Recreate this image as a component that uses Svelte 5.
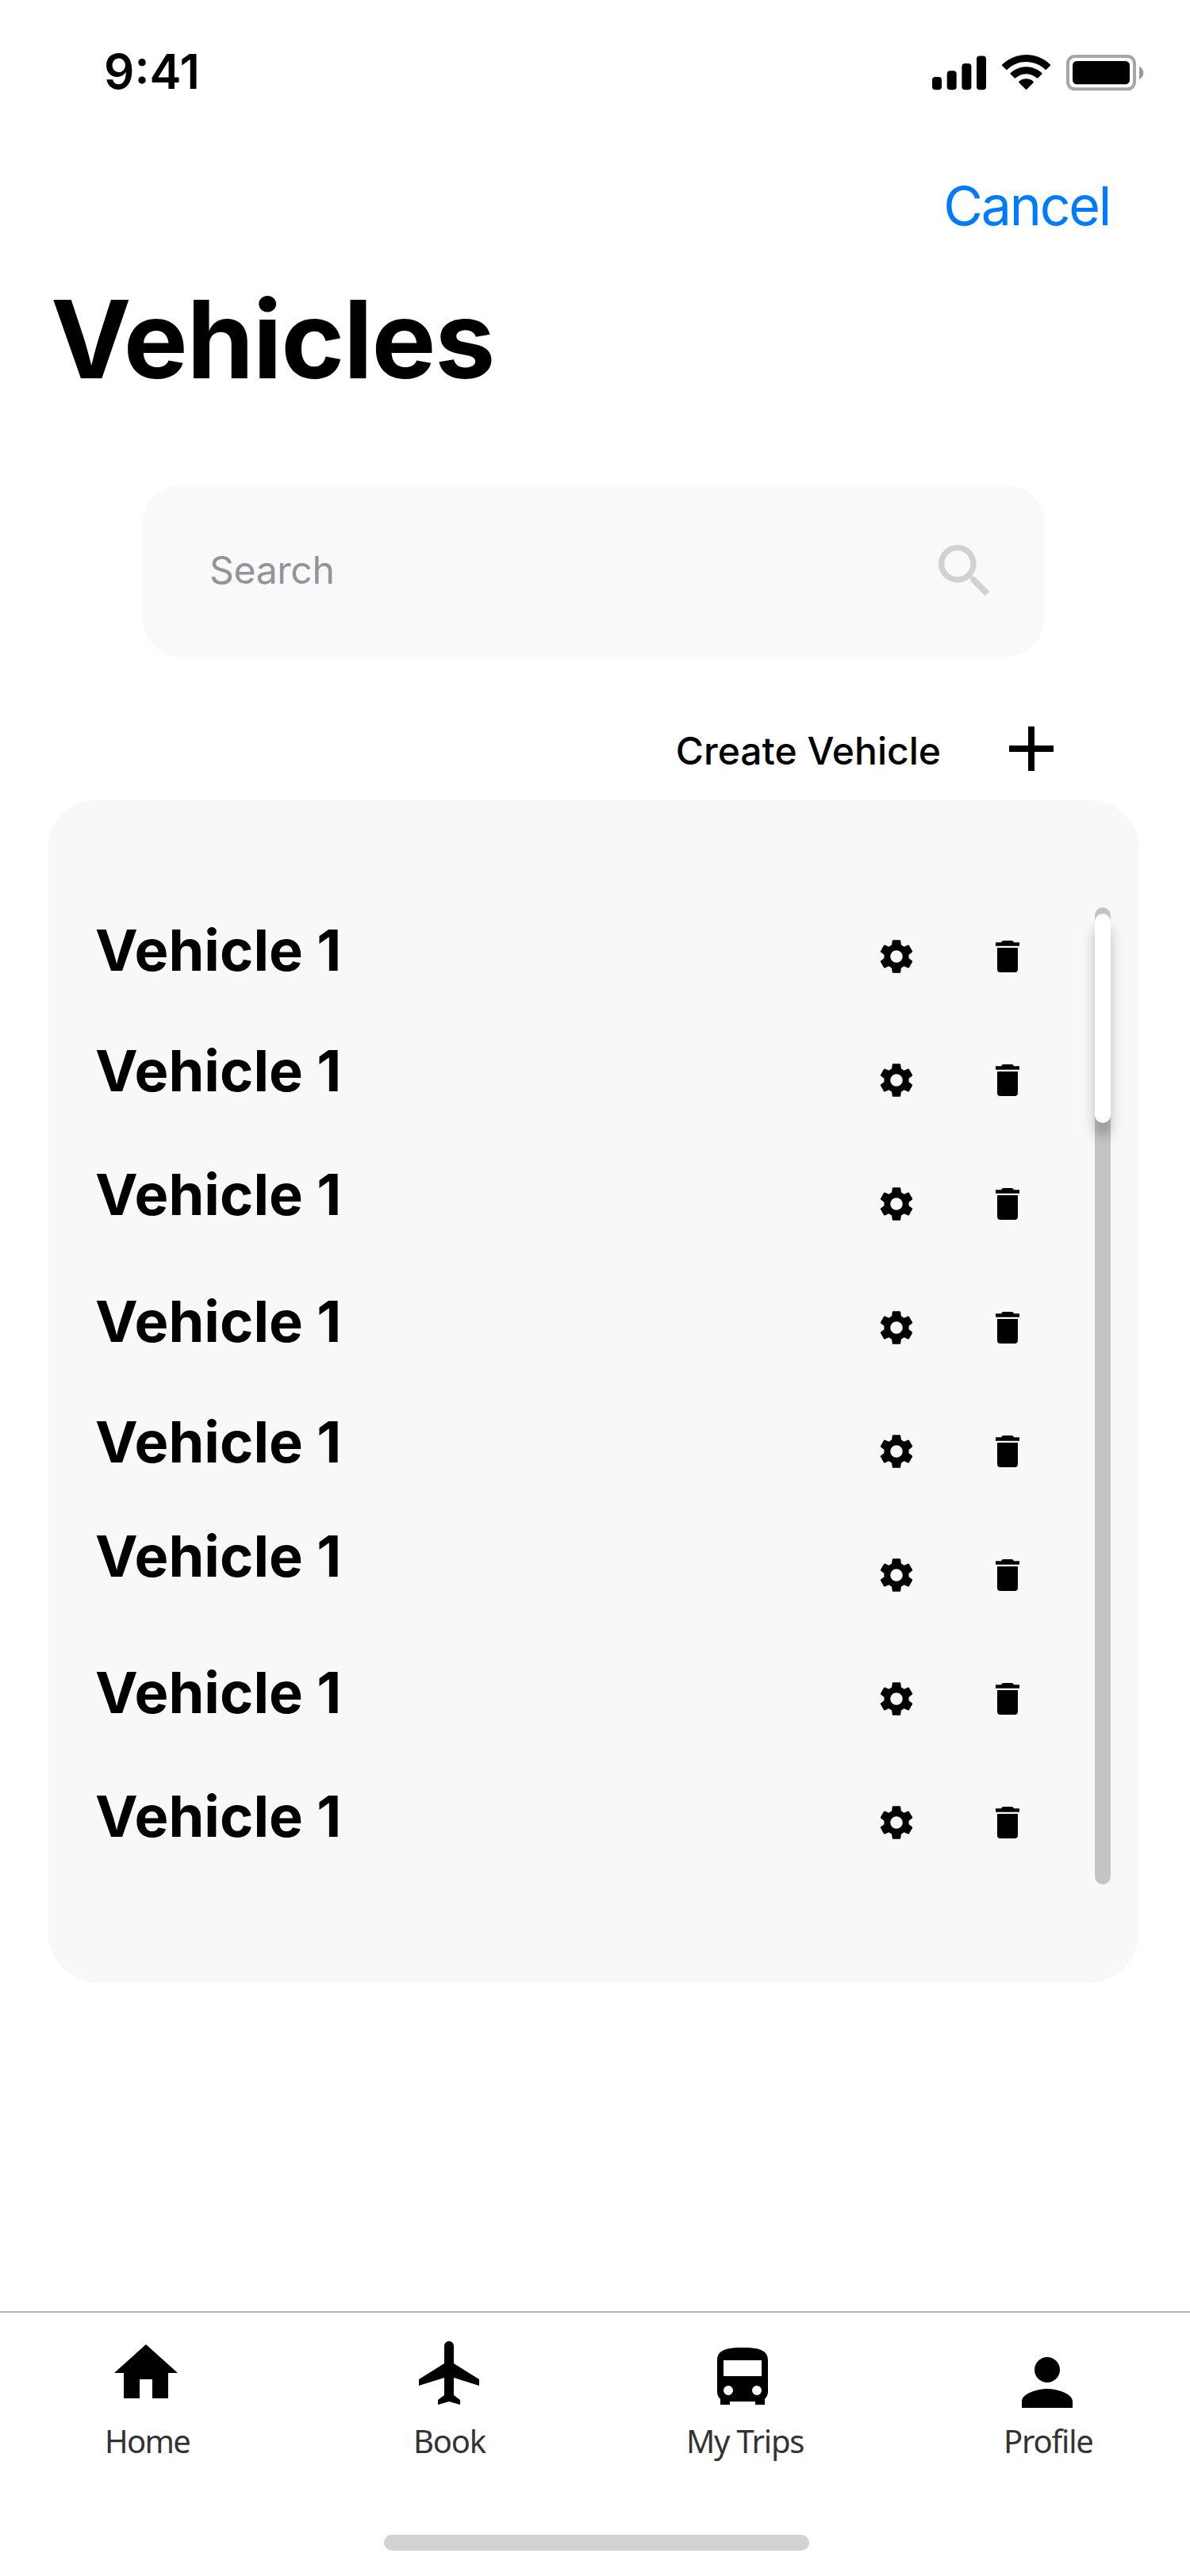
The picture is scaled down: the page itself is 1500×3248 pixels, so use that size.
<script>
  // Each name sits at its own offset from the top of its 156px row.
  const vehicles = [
    { name: 'Vehicle 1', shift: 0 },
    { name: 'Vehicle 1', shift: -4 },
    { name: 'Vehicle 1', shift: -4 },
    { name: 'Vehicle 1', shift: 0 },
    { name: 'Vehicle 1', shift: -4 },
    { name: 'Vehicle 1', shift: -16 },
    { name: 'Vehicle 1', shift: 0 },
    { name: 'Vehicle 1', shift: 0 },
  ];
</script>

<div class="screen">
  <header class="status">
    <span class="time">9:41</span>
    <div class="indicators">
      <svg class="signal" viewBox="0 0 68 44">
        <rect x="0" y="27" width="12" height="16.3" rx="4" />
        <rect x="18.7" y="19.3" width="12" height="24" rx="4" />
        <rect x="37.4" y="10" width="12" height="33.3" rx="4" />
        <rect x="56" y="0.6" width="12" height="42.7" rx="4" />
      </svg>
      <svg class="wifi" viewBox="0 0 15.333 11">
        <path d="M7.637 2.277c2.216 0 4.347.852 5.953 2.379.12.118.314.116.433-.004l1.156-1.166a.32.32 0 0 0-.003-.456c-4.215-4.04-10.865-4.04-15.08 0a.32.32 0 0 0-.003.456l1.157 1.166c.119.12.312.122.433.004 1.606-1.527 3.738-2.379 5.954-2.379zM7.637 6.073c1.217 0 2.391.453 3.294 1.27.122.116.314.113.433-.006l1.155-1.167a.325.325 0 0 0-.005-.459c-2.748-2.556-7.004-2.556-9.752 0a.325.325 0 0 0-.005.459l1.155 1.167c.119.119.311.122.433.006.902-.817 2.075-1.27 3.292-1.27zM9.95 8.627a.31.31 0 0 1-.094.23l-1.998 2.012a.31.31 0 0 1-.443 0L5.414 8.857a.315.315 0 0 1 .01-.457c1.277-1.084 3.148-1.084 4.425 0a.31.31 0 0 1 .101.227z" />
      </svg>
      <svg class="battery" viewBox="0 0 98 46">
        <rect x="2" y="2" width="84" height="41.3" rx="8.7" fill="none" stroke="#a6a6a6" stroke-width="4" />
        <path d="M92 15v16c3.200-1.350 5.300-4.500 5.300-8s-2.100-6.650-5.300-8z" fill="#999" />
        <rect x="8" y="8" width="72" height="29.300" rx="5.300" />
      </svg>
    </div>
  </header>

  <div class="actions"><span class="cancel">Cancel</span></div>
  <h1>Vehicles</h1>

  <div class="search">
    <span>Search</span>
    <svg viewBox="0 0 24 24"><path d="M15.500 14h-.790l-.280-.270A6.471 6.471 0 0 0 16 9.500 6.500 6.500 0 1 0 9.500 16c1.610 0 3.090-.590 4.230-1.570l.270.280v.790l5 4.990L20.490 19l-4.990-5zm-6 0C7.010 14 5 11.990 5 9.500S7.010 5 9.500 5 14 7.010 14 9.500 11.990 14 9.500 14z" /></svg>
  </div>

  <div class="create">
    <span>Create Vehicle</span>
    <svg viewBox="0 0 56 56"><path d="M24 0h8v24h24v8H32v24h-8V32H0v-8h24z" /></svg>
  </div>

  <main class="card">
    <ul>
      {#each vehicles as v}
        <li>
          <span class="name" style="margin-top: {v.shift}px">{v.name}</span>
          <svg class="gear" viewBox="0 0 24 24"><path d="M19.140 12.940c.040-.300.060-.610.060-.940 0-.320-.020-.640-.070-.940l2.030-1.580a.490.490 0 0 0 .120-.610l-1.920-3.320a.488.488 0 0 0-.590-.220l-2.390.960c-.500-.380-1.030-.700-1.620-.940l-.360-2.540a.484.484 0 0 0-.480-.410h-3.840c-.240 0-.430.170-.470.410l-.360 2.540c-.590.240-1.130.570-1.620.940l-2.390-.960a.480.480 0 0 0-.590.220L2.740 8.870c-.120.210-.080.470.120.610l2.030 1.580c-.050.300-.090.630-.090.940s.020.640.070.940l-2.030 1.580a.490.490 0 0 0-.120.610l1.920 3.320c.120.220.370.290.590.220l2.390-.960c.500.380 1.030.700 1.620.940l.360 2.540c.050.240.240.410.480.410h3.840c.240 0 .440-.170.470-.410l.360-2.540c.590-.240 1.130-.560 1.620-.940l2.390.960c.220.080.470 0 .590-.220l1.920-3.320c.120-.220.070-.470-.120-.610zM12 15.600A3.600 3.600 0 1 1 12 8.400a3.600 3.600 0 0 1 0 7.200z" /></svg>
          <svg class="trash" viewBox="0 0 32 40"><path d="M11 0h10c2 0 2.500 1 3 2.300h7v4.400H1V2.300h7C8.500 1 9 0 11 0zM3 9h26v27a4 4 0 0 1-4 4H7a4 4 0 0 1-4-4z" /></svg>
        </li>
      {/each}
    </ul>
    <div class="track"><div class="thumb"></div></div>
  </main>

  <nav>
    <div class="tab home">
      <svg viewBox="0 0 24 24"><path d="M10 20v-6h4v6h5v-8h3L12 3 2 12h3v8z" /></svg>
      <span>Home</span>
    </div>
    <div class="tab book">
      <svg viewBox="0 0 24 24"><path d="M21 16v-2l-8-5V3.500C13 2.670 12.330 2 11.500 2S10 2.670 10 3.500V9l-8 5v2l8-2.500V19l-2 1.500V22l3.500-1 3.500 1v-1.500L13 19v-5.500z" /></svg>
      <span>Book</span>
    </div>
    <div class="tab trips">
      <svg viewBox="0 0 24 24"><path fill-rule="evenodd" d="M4 16c0 .880.390 1.670 1 2.220V20h3v-1h8v1h3v-1.780c.610-.550 1-1.340 1-2.220V6c0-3.500-3.580-4-8-4s-8 .500-8 4zM7.500 17a1.500 1.500 0 1 1 0-3 1.500 1.500 0 0 1 0 3zm9 0a1.500 1.500 0 1 1 0-3 1.500 1.500 0 0 1 0 3zM18 11H6V6h12z" /></svg>
      <span>My Trips</span>
    </div>
    <div class="tab profile">
      <svg viewBox="0 0 24 24"><path d="M12 12a4 4 0 1 0 0-8 4 4 0 0 0 0 8zm0 2c-2.670 0-8 1.340-8 4v2h16v-2c0-2.660-5.330-4-8-4z" /></svg>
      <span>Profile</span>
    </div>
  </nav>
  <div class="indicator"></div>
</div>

<style>
  :global(body) { margin: 0; background: #fff; }
  .screen {
    width: 1500px;
    height: 3248px;
    box-sizing: border-box;
    display: flex;
    flex-direction: column;
    background: #fff;
    color: #000;
    font-family: Inter, sans-serif;
    overflow: hidden;
  }
  svg { display: block; flex: none; }

  .status {
    height: 176px;
    box-sizing: border-box;
    padding: 54px 58px 0 131px;
    display: flex;
    justify-content: space-between;
    align-items: flex-start;
  }
  .time { font-size: 60px; line-height: 72px; font-weight: 600; }
  .indicators { display: flex; padding-top: 15px; }
  .signal { width: 68px; height: 44px; margin-top: 1px; }
  .wifi { width: 61.3px; height: 44px; margin-left: 20px; }
  .battery { width: 98px; height: 46px; margin-left: 20px; }

  .actions { height: 168px; display: flex; justify-content: flex-end; padding-right: 101px; }
  .cancel { margin-top: 41px; font-size: 68px; line-height: 84px; color: #007aff; letter-spacing: -2.2px; }

  h1 { margin: 2px 0 0 64px; height: 266px; font-size: 136px; line-height: 164px; font-weight: 700; letter-spacing: -1.36px; }

  .search {
    width: 1136px;
    height: 216px;
    box-sizing: border-box;
    margin-left: 180px;
    padding: 0 56px 0 84px;
    display: flex;
    align-items: center;
    justify-content: space-between;
    border-radius: 48px;
    background: #f9f9fb;
  }
  .search span { margin-bottom: 3px; font-size: 48px; line-height: 58px; color: #949494; letter-spacing: -0.3px; }
  .search svg { width: 88px; height: 88px; fill: #d1d1d1; }

  .create {
    height: 180px;
    display: flex;
    justify-content: flex-end;
    gap: 86px;
    padding-right: 172px;
  }
  .create span { margin-top: 90px; font-size: 48px; line-height: 58px; font-weight: 500; }
  .create svg { width: 56px; height: 56px; margin-top: 88px; }

  .card {
    width: 1376px;
    height: 1492px;
    box-sizing: border-box;
    margin-left: 60px;
    padding: 136px 36px 0 60px;
    display: flex;
    justify-content: space-between;
    border-radius: 64px;
    background: #f8f8f8;
  }
  ul { list-style: none; margin: 0; padding: 10px 0 0; width: 1166px; }
  li { display: flex; height: 156px; align-items: flex-start; }
  .name { flex: 1; font-size: 72px; line-height: 88px; font-weight: 700; letter-spacing: 0.1px; }
  .gear { width: 52px; height: 52px; margin: 26px 98px 0 0; }
  .trash { width: 32px; height: 40px; margin-top: 32px; }
  .track { width: 20px; height: 1232px; border-radius: 10px; background: #c4c4c4; padding-top: 8px; box-sizing: border-box; }
  .thumb { height: 264px; border-radius: 10px; background: #fff; box-shadow: 0 16px 16px rgba(0, 0, 0, .25); }

  nav {
    margin-top: 414px;
    height: 282px;
    box-sizing: border-box;
    border-top: 2px solid #b2b2b2;
    display: grid;
    grid-template-columns: 376px 378px 372px 374px;
    color: #333;
    font-family: "Noto Sans", sans-serif;
    font-size: 40px;
    letter-spacing: -1.2px;
  }
  .tab { display: flex; flex-direction: column; height: 189px; }
  .tab svg { width: 96px; height: 96px; fill: #000; }
  .tab span { margin-top: auto; line-height: 52px; padding-bottom: 1px; white-space: nowrap; }
  .home svg { margin: 28px 0 0 136px; }
  .home span { margin-left: 132px; letter-spacing: -1.7px; }
  .book svg { margin: 28px 0 0 144px; }
  .book span { margin-left: 145px; }
  .trips svg { margin: 36px 0 0 134px; }
  .trips span { margin-left: 111px; }
  .profile svg { margin: 40px 0 0 146px; }
  .profile span { margin-left: 139px; }

  .indicator { width: 536px; height: 20px; margin-left: 484px; border-radius: 10px; background: #d1d1d6; }
</style>
